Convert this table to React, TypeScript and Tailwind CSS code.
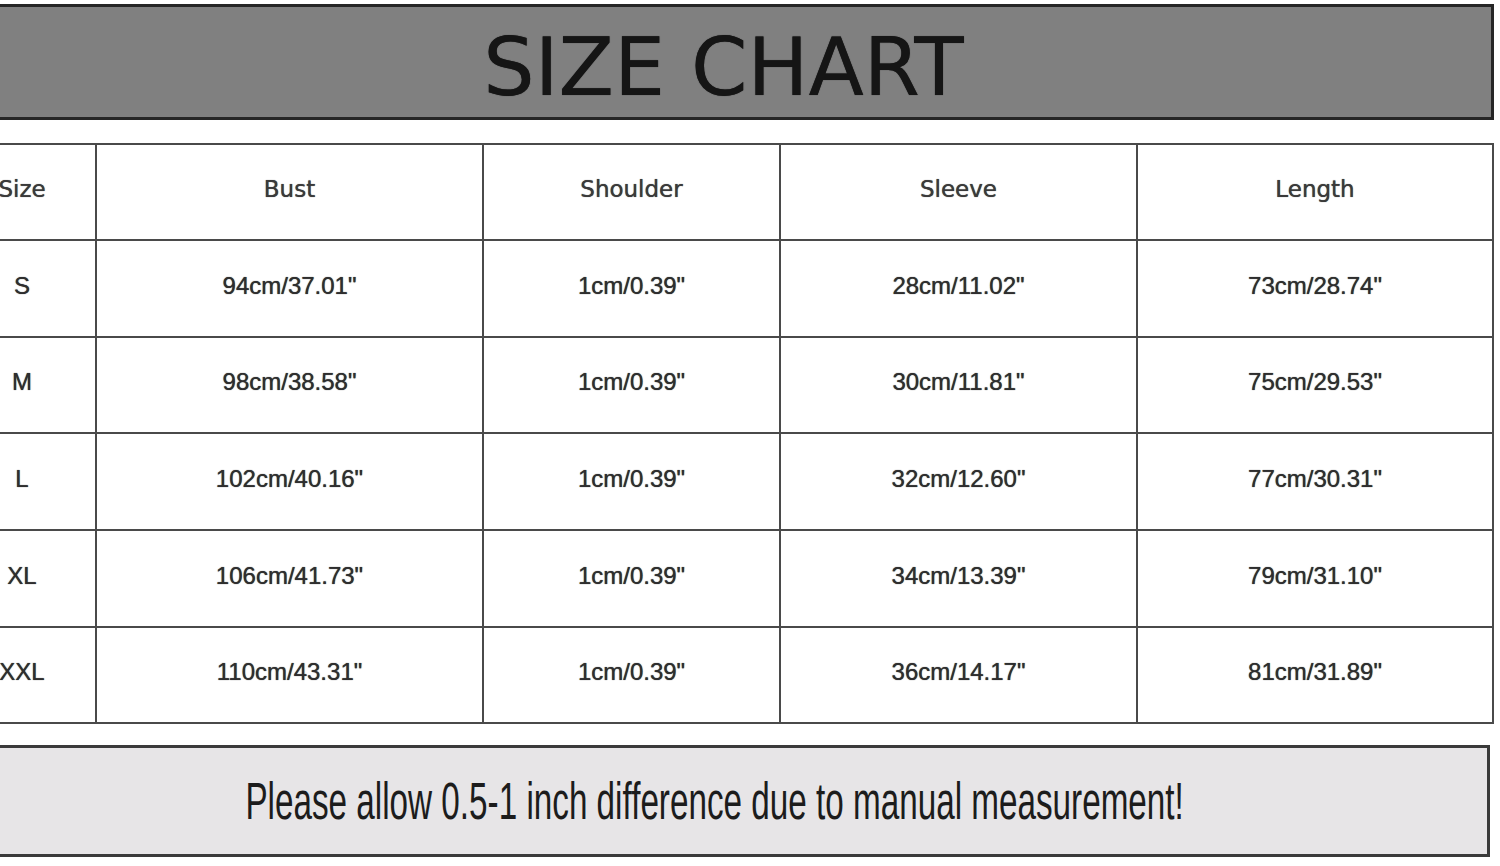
import React from 'react';

const rows = [
  ['S', '94cm/37.01"', '1cm/0.39"', '28cm/11.02"', '73cm/28.74"'],
  ['M', '98cm/38.58"', '1cm/0.39"', '30cm/11.81"', '75cm/29.53"'],
  ['L', '102cm/40.16"', '1cm/0.39"', '32cm/12.60"', '77cm/30.31"'],
  ['XL', '106cm/41.73"', '1cm/0.39"', '34cm/13.39"', '79cm/31.10"'],
  ['XXL', '110cm/43.31"', '1cm/0.39"', '36cm/14.17"', '81cm/31.89"'],
];

// row heights follow the picture's grid lines (143, 239, 336, 432, 529, 626, 722)
const rowH = ['h-[97px]', 'h-[96px]', 'h-[97px]', 'h-[97px]', 'h-[96px]'];

const headers = ['Size', 'Bust', 'Shoulder', 'Sleeve', 'Length'];

export default function App() {
  return (
    <div className="w-[1500px] h-[866px] bg-white overflow-hidden pt-[4px]">
      {/* title bar */}
      <div className="ml-[-47px] w-[1541px] h-[116px] bg-[#808080] border-[3px] border-[#262626] flex items-center justify-center">
        <span className="text-[81px] leading-none text-[#151515] font-['DejaVu_Sans',sans-serif] mt-[10px] [text-shadow:0_0_0.8px_#151515]">
          SIZE CHART
        </span>
      </div>

      {/* table */}
      <table className="mt-[23px] ml-[-53px] w-[1545px] table-fixed border-collapse">
        <colgroup>
          <col className="w-[148px]" />
          <col className="w-[387px]" />
          <col className="w-[297px]" />
          <col className="w-[357px]" />
          <col className="w-[356px]" />
        </colgroup>
        <thead>
          <tr className="h-[96px]">
            {headers.map((h) => (
              <th
                key={h}
                className="border-2 border-[#4a4a4a] text-center font-normal pb-[6px] text-[23px] text-[#3a3a3a] font-['DejaVu_Sans',sans-serif] [text-shadow:0_0_0.8px_#3a3a3a]"
              >
                {h}
              </th>
            ))}
          </tr>
        </thead>
        <tbody>
          {rows.map((r, ri) => (
            <tr key={r[0]} className={rowH[ri]}>
              {r.map((c, i) => (
                <td
                  key={i}
                  className="border-2 border-[#4a4a4a] text-center pb-[6px] text-[24px] text-[#2e2e2e] font-['Liberation_Sans',Arial,sans-serif] [text-shadow:0_0_0.9px_#2e2e2e]"
                >
                  {c}
                </td>
              ))}
            </tr>
          ))}
        </tbody>
      </table>

      {/* note */}
      <div className="mt-[21px] ml-[-60px] w-[1550px] h-[112px] bg-[#e7e5e7] border-[3px] border-[#3a3a3a] flex items-center justify-center">
        <span className="inline-block whitespace-nowrap text-[51px] leading-none text-[#1c1c1c] font-['Liberation_Sans',Arial,sans-serif] scale-x-[0.652]">
          Please allow 0.5-1 inch difference due to manual measurement!
        </span>
      </div>
    </div>
  );
}
